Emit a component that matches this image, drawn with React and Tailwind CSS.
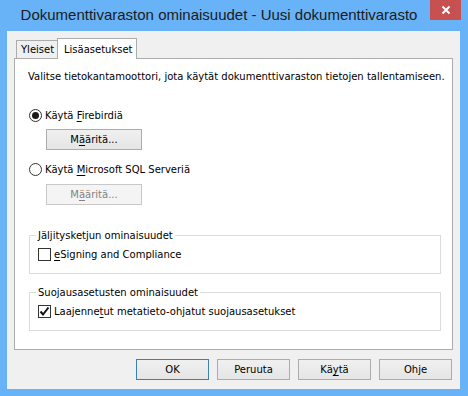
import React from 'react';

const font = { fontFamily: '"DejaVu Sans", Verdana, sans-serif' };

const Mn = ({ children }) => <span className="underline underline-offset-[2px]">{children}</span>;

const Radio = ({ checked, children }) => (
  <div className="flex items-center h-[13px]">
    <span className="w-[13px] h-[13px] rounded-full border border-[#333] bg-white flex items-center justify-center">
      {checked && <span className="w-[7px] h-[7px] rounded-full bg-[#1a1a1a]" />}
    </span>
    <span className="ml-[3px] leading-[13px]">{children}</span>
  </div>
);

const Check = ({ checked, children }) => (
  <div className="flex items-center h-[13px] ml-[2px]">
    <span className="w-[13px] h-[13px] border border-[#333] bg-white flex items-center justify-center">
      {checked && (
        <svg width="11" height="11" viewBox="0 0 11 11">
          <path d="M1.5 5.5 L4 8.5 L9.5 1.5" fill="none" stroke="#111" strokeWidth="2" />
        </svg>
      )}
    </span>
    <span className="ml-[3px] leading-[13px]">{children}</span>
  </div>
);

const Button = ({ children, primary, disabled, className = '' }) => (
  <div
    className={`h-[21px] flex items-center justify-center border ${
      primary ? 'border-[#3c7fb1]' : disabled ? 'border-[#c8c8c8]' : 'border-[#acacac]'
    } ${
      disabled
        ? 'bg-[#f4f4f4] text-[#838383]'
        : 'bg-gradient-to-b from-[#f0f0f0] to-[#e5e5e5] text-black'
    } ${className}`}
  >
    {children}
  </div>
);

export default function App() {
  return (
    <div className="w-[468px] h-[396px] bg-[#68b3f7] flex flex-col text-[10px] text-black" style={font}>
      {/* Title bar */}
      <div className="h-[31px] flex items-start">
        <div
          className="flex-1 h-[30px] flex items-center justify-center pl-[8px] text-[15px] text-[#1b1b1b] whitespace-nowrap"
          style={{ fontFamily: '"Liberation Sans", Arial, sans-serif' }}
        >
          Dokumenttivaraston ominaisuudet - Uusi dokumenttivarasto
        </div>
        <div className="w-[31px] h-[20px] bg-[#c75050] flex items-center justify-center mr-[7px]">
          <svg width="10" height="10" viewBox="0 0 10 10">
            <path d="M1.5 1.5 L8.5 8.5 M8.5 1.5 L1.5 8.5" stroke="#fff" strokeWidth="2" />
          </svg>
        </div>
      </div>

      {/* Client area */}
      <div className="ml-[7px] mr-[8px] h-[358px] bg-[#f0f0f0] px-[7px] pt-[7px]">
        {/* Tabs */}
        <div className="flex items-end h-[20px] pl-[2px]">
          <div className="h-[18px] w-[41px] pl-[4px] flex items-center border border-b-0 border-r-0 border-[#acacac] bg-[#f0f0f0]">
            Yleiset
          </div>
          <div className="relative z-10 h-[21px] -mb-px w-[80px] flex items-center pl-[6px] border border-b-0 border-[#acacac] bg-white">
            Lisäasetukset
          </div>
        </div>

        {/* Panel */}
        <div className="h-[292px] border border-[#acacac] bg-white pl-[14px] pr-[8px] pt-[11px]">
          <p className="leading-[13px] -ml-px whitespace-nowrap">
            Valitse tietokantamoottori, jota käytät dokumenttivaraston tietojen tallentamiseen.
          </p>

          <div className="mt-[26px]">
            <Radio checked>
              Käytä <Mn>F</Mn>irebirdiä
            </Radio>
          </div>
          <Button className="mt-[7px] ml-[17px] w-[96px] h-[20px]">
            M<Mn>ä</Mn>äritä...
          </Button>

          <div className="mt-[13px]">
            <Radio>
              Käytä <Mn>M</Mn>icrosoft SQL Serveriä
            </Radio>
          </div>
          <Button disabled className="mt-[8px] ml-[17px] w-[96px] h-[20px]">
            M<Mn>ä</Mn>äritä...
          </Button>

          <fieldset className="mt-[24px] mr-[3px] border border-[#dcdcdc] px-[6px] pt-[6px] pb-[12px]">
            <legend className="px-[2px] leading-[13px]">Jäljitysketjun ominaisuudet</legend>
            <Check>
              <Mn>e</Mn>Signing and Compliance
            </Check>
          </fieldset>

          <fieldset className="mt-[12px] mr-[3px] border border-[#dcdcdc] px-[6px] pt-[6px] pb-[12px]">
            <legend className="px-[2px] leading-[13px]">Suojausasetusten ominaisuudet</legend>
            <Check checked>
              Laajenne<Mn>t</Mn>ut metatieto-ohjatut suojausasetukset
            </Check>
          </fieldset>
        </div>

        {/* Dialog buttons */}
        <div className="mt-[9px] flex justify-end gap-[8px] pr-[1px]">
          <Button primary className="w-[73px]">OK</Button>
          <Button className="w-[73px]">Peruuta</Button>
          <Button className="w-[73px]">
            Kä<Mn>y</Mn>tä
          </Button>
          <Button className="w-[73px]">Ohje</Button>
        </div>
      </div>
    </div>
  );
}
